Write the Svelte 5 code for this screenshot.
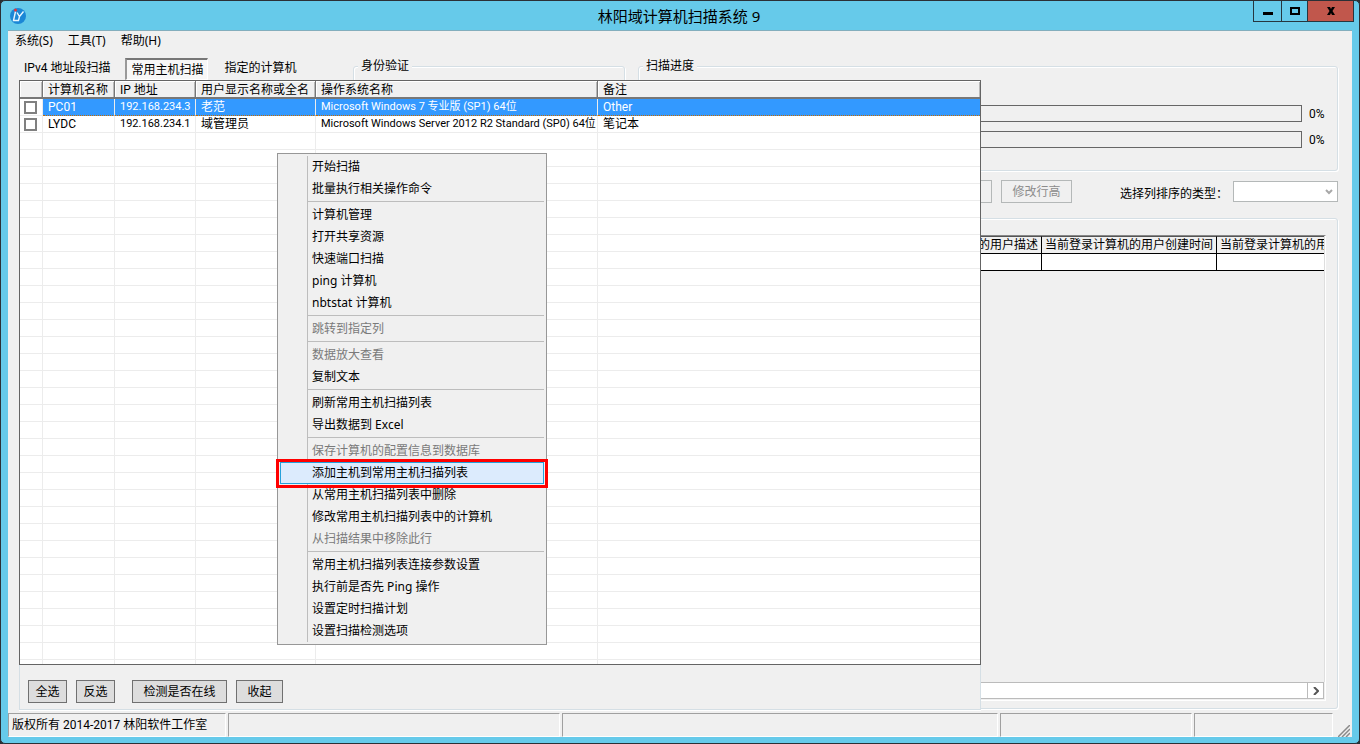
<script>
    let menus = ['系统(S)', '工具(T)', '帮助(H)'];
    let tabs = ['IPv4 地址段扫描', '常用主机扫描', '指定的计算机'];
    let activeTab = '常用主机扫描';

    let hosts = [
        { name: 'PC01', ip: '192.168.234.3', user: '老范', os: 'Microsoft Windows 7 专业版 (SP1) 64位', note: 'Other', checked: false },
        { name: 'LYDC', ip: '192.168.234.1', user: '域管理员', os: 'Microsoft Windows Server 2012 R2 Standard (SP0) 64位', note: '笔记本', checked: false }
    ];
    let selected = 'PC01';
    let emptyRows = Array(60);

    // groups are divided by a separator line
    let menuGroups = [
        [{ text: '开始扫描' }, { text: '批量执行相关操作命令' }],
        [
            { text: '计算机管理' },
            { text: '打开共享资源' },
            { text: '快速端口扫描' },
            { text: 'ping 计算机' },
            { text: 'nbtstat 计算机' }
        ],
        [{ text: '跳转到指定列', disabled: true }],
        [{ text: '数据放大查看', disabled: true }, { text: '复制文本' }],
        [{ text: '刷新常用主机扫描列表' }, { text: '导出数据到 Excel' }],
        [
            { text: '保存计算机的配置信息到数据库', disabled: true },
            { text: '添加主机到常用主机扫描列表', active: true },
            { text: '从常用主机扫描列表中删除' },
            { text: '修改常用主机扫描列表中的计算机' },
            { text: '从扫描结果中移除此行', disabled: true }
        ],
        [
            { text: '常用主机扫描列表连接参数设置' },
            { text: '执行前是否先 Ping 操作' },
            { text: '设置定时扫描计划' },
            { text: '设置扫描检测选项' }
        ]
    ];

    function checkAll() {
        hosts = hosts.map((h) => ({ ...h, checked: true }));
    }

    function invert() {
        hosts = hosts.map((h) => ({ ...h, checked: !h.checked }));
    }
</script>

<div class="window">
    <header class="titlebar">
        <svg class="logo" viewBox="0 0 16 16" aria-hidden="true">
            <circle cx="8" cy="8" r="8" fill="#1b87d6" />
            <path d="M5.500 3.500 3.500 12.500H9M7 4.500 9.500 8.500 13.500 3.500M9.500 8.500 8.500 12.500" fill="none" stroke="#e8f6ff" stroke-width="1.400" />
            <circle cx="5.500" cy="2" r="1.500" fill="#e0353c" />
        </svg>
        <h1>林阳域计算机扫描系统 9</h1>
        <div class="controls">
            <button class="min" aria-label="最小化">
                <svg viewBox="0 0 10 10"><path d="M0 6h10v3H0z" /></svg>
            </button>
            <button class="max" aria-label="最大化">
                <svg viewBox="0 0 10 10"><path d="M0 1h10v8H0zM2 3v4h6V3z" fill-rule="evenodd" /></svg>
            </button>
            <button class="close" aria-label="关闭">
                <svg viewBox="0 0 10 10"><path d="M1 1h3l1 2 1-2h3L6.500 5 9 9H6L5 7 4 9H1l2.500-4z" /></svg>
            </button>
        </div>
    </header>

    <div class="client">
        <nav class="menubar">
            {#each menus as m}
                <button>{m}</button>
            {/each}
        </nav>

        <main>
            <div class="top">
                <div class="tabs" role="tablist">
                    {#each tabs as t}
                        <button role="tab" aria-selected={t === activeTab} class:on={t === activeTab} on:click={() => (activeTab = t)}>{t}</button>
                    {/each}
                </div>
                <fieldset class="auth">
                    <legend>身份验证</legend>
                </fieldset>
                <fieldset class="scan">
                    <legend>扫描进度</legend>
                    <div class="bar"><progress value="0" max="100" aria-label="扫描进度"></progress><span>0%</span></div>
                    <div class="bar"><progress value="0" max="100" aria-label="扫描进度"></progress><span>0%</span></div>
                </fieldset>
            </div>

            <div class="tools">
                <button disabled aria-label="操作"></button>
                <button disabled>修改行高</button>
                <label for="sort">选择列排序的类型：</label>
                <div class="combo">
                    <select id="sort" disabled></select>
                    <svg viewBox="0 0 8 6"><path d="M1 1 4 4 7 1" fill="none" stroke="#a8a8a8" stroke-width="2" /></svg>
                </div>
            </div>

            <fieldset class="results">
                <div class="grid">
                    <div class="viewport">
                        <table>
                            <thead>
                                <tr><th class="wide"></th><th class="desc">当前登录计算机的用户描述</th><th>当前登录计算机的用户创建时间</th><th>当前登录计算机的用</th></tr>
                            </thead>
                            <tbody>
                                <tr><td></td><td></td><td></td><td></td></tr>
                            </tbody>
                        </table>
                    </div>
                    <div class="hscroll">
                        <button aria-label="向右滚动">
                            <svg viewBox="0 0 6 8"><path d="M1 0 5 4 1 8" fill="none" stroke="#555" stroke-width="2" /></svg>
                        </button>
                    </div>
                </div>
            </fieldset>

            <section class="panel">
                <div class="list">
                    <table>
                        <colgroup>
                            <col class="c-check" /><col class="c-name" /><col class="c-ip" /><col class="c-user" /><col class="c-os" /><col />
                        </colgroup>
                        <thead>
                            <tr><th></th><th>计算机名称</th><th>IP 地址</th><th>用户显示名称或全名</th><th>操作系统名称</th><th>备注</th></tr>
                        </thead>
                        <tbody>
                            {#each hosts as h}
                                <tr class:selected={h.name === selected} on:click={() => (selected = h.name)}>
                                    <td class="check"><input type="checkbox" bind:checked={h.checked} aria-label={h.name} /></td>
                                    <td>{h.name}</td>
                                    <td class="latin">{h.ip}</td>
                                    <td>{h.user}</td>
                                    <td class="latin">{h.os}</td>
                                    <td>{h.note}</td>
                                </tr>
                            {/each}
                            {#each emptyRows as _}
                                <tr><td></td><td></td><td></td><td></td><td></td><td></td></tr>
                            {/each}
                        </tbody>
                    </table>
                </div>
                <div class="actions">
                    <button on:click={checkAll}>全选</button>
                    <button on:click={invert}>反选</button>
                    <button class="online">检测是否在线</button>
                    <button class="fold">收起</button>
                </div>
            </section>

            <div class="popup" role="menu">
                {#each menuGroups as group}
                    <div class="group">
                        {#each group as item}
                            <button role="menuitem" disabled={item.disabled} class:active={item.active}>{item.text}</button>
                        {/each}
                    </div>
                {/each}
            </div>
        </main>

        <footer class="status">
            <span class="copy">版权所有 2014-2017 林阳软件工作室</span>
            <span class="s2"></span>
            <span class="s3"></span>
            <span class="s4"></span>
            <span class="s5"></span>
            <svg viewBox="0 0 12 12"><path d="M0 12 12 0M4 12 12 4M8 12 12 8" stroke="#8a8a8a" stroke-width="1.500" /></svg>
        </footer>
    </div>
</div>

<style>
    :global(body) {
        margin: 0;
        background: #2b2f33;
    }

    .window {
        box-sizing: border-box;
        height: 100vh;
        display: flex;
        flex-direction: column;
        padding: 0 7px 6px;
        border: 1px solid #2b3036;
        border-radius: 5px;
        background: #66caea;
        color: #000;
        font: 12px/16px Roboto, "Noto Sans CJK SC", sans-serif;
    }

    button,
    select {
        font: inherit;
        color: inherit;
        padding: 0;
        margin: 0;
        border: 0;
        background: none;
        white-space: nowrap;
    }

    th,
    td,
    label,
    legend,
    span {
        white-space: nowrap;
    }

    table {
        border-collapse: separate;
        border-spacing: 0;
        table-layout: fixed;
    }

    .titlebar {
        position: relative;
        display: flex;
        align-items: center;
        height: 29px;
    }

    .logo {
        width: 16px;
        height: 16px;
        margin-left: 2px;
    }

    h1 {
        flex: 1;
        margin: 0;
        padding-right: 20px;
        text-align: center;
        font: 15px/28px "Noto Sans", "Noto Sans CJK SC", sans-serif;
    }

    .controls {
        position: absolute;
        top: 0;
        right: -2px;
        display: flex;
        border: 1px solid #26363f;
        border-top: 0;
    }

    .controls button {
        display: grid;
        place-items: center;
        width: 28px;
        height: 20px;
        border-right: 1px solid #26363f;
        box-sizing: border-box;
    }

    .controls .max {
        width: 26px;
    }

    .controls .close {
        width: 45px;
        border-right: 0;
        background: #c1574c;
    }

    .controls svg {
        width: 10px;
        height: 10px;
    }

    .client {
        flex: 1;
        min-height: 0;
        display: flex;
        flex-direction: column;
        border-top: 1px solid #83aebd;
        background: #f0f0f0;
    }

    .menubar {
        display: flex;
        gap: 15px;
        height: 20px;
        padding-left: 7px;
        font-family: "Noto Sans", "Noto Sans CJK SC", sans-serif;
    }

    main {
        position: relative;
        flex: 1;
        min-height: 0;
        display: flex;
        flex-direction: column;
        padding: 7px 14px 4px 11px;
    }

    fieldset {
        box-sizing: border-box;
        min-width: 0;
        margin: 0;
        padding: 0;
        border: 1px solid #d5dfe5;
        border-radius: 3px;
        box-shadow: inset 1px 1px #fff, 1px 1px #fff;
    }

    legend {
        margin-left: 4px;
        padding: 0 3px;
        background: #f0f0f0;
    }

    .top {
        display: flex;
        height: 113px;
    }

    .tabs {
        display: flex;
        align-items: flex-start;
        width: 334px;
    }

    .tabs button {
        height: 20px;
        padding: 0 15px 0 5px;
    }

    .tabs .on {
        height: 22px;
        margin-right: 11px;
        padding: 0 4px;
        border: 1px solid #fff;
        border-top: 2px solid #777;
        border-left: 2px solid #999;
        background: #f7f7f7;
    }

    .auth {
        width: 272px;
        margin-right: 13px;
    }

    .scan {
        flex: 1;
    }

    .scan .bar:first-of-type {
        margin-top: 31px;
    }

    .bar {
        display: flex;
        align-items: center;
        margin: 0 14px 9px;
    }

    .bar span {
        width: 14px;
    }

    progress {
        box-sizing: border-box;
        flex: 1;
        height: 17px;
        margin-right: 7px;
        appearance: none;
        border: 1px solid #666;
        background: #f0f0f0;
    }

    progress::-webkit-progress-bar {
        background: #f0f0f0;
    }

    .tools {
        display: flex;
        justify-content: flex-end;
        align-items: center;
        height: 23px;
        margin: 9px 0 15px;
    }

    .tools button {
        width: 71px;
        height: 23px;
        margin-right: 9px;
        border: 1px solid #b4b8b8;
        color: #8c8c8c;
    }

    .tools label {
        margin-left: 39px;
        padding-top: 4px;
    }

    .combo {
        position: relative;
        width: 105px;
        height: 21px;
        margin-left: 5px;
    }

    .combo select {
        width: 100%;
        height: 100%;
        appearance: none;
        border: 1px solid #b4b8b8;
        background: #fff;
        opacity: 1;
    }

    .combo svg {
        position: absolute;
        right: 5px;
        top: 8px;
        width: 8px;
        height: 6px;
    }

    .results {
        flex: 1;
        display: flex;
        padding: 16px 11px 7px;
    }

    .grid {
        flex: 1;
        min-width: 0;
        display: flex;
        flex-direction: column;
        border-top: 1px solid #888;
        border-right: 1px solid #fff;
        border-bottom: 1px solid #fff;
    }

    .viewport {
        flex: 1;
        overflow: hidden;
        border-right: 1px solid #dedede;
    }

    .viewport table {
        width: 1361px;
    }

    .viewport th,
    .viewport td {
        box-sizing: border-box;
        height: 17px;
        padding: 0 0 0 3px;
        border-right: 1px solid #000;
        border-bottom: 1px solid #000;
        font-weight: normal;
        text-align: left;
        line-height: 16px;
    }

    .viewport th {
        width: 175px;
        border-top: 1px solid #555;
        height: 18px;
    }

    .viewport th.wide {
        width: 860px;
    }

    .viewport th.desc {
        width: 151px;
    }

    .viewport td {
        background: #fff;
    }

    .hscroll {
        display: flex;
        justify-content: flex-end;
        height: 15px;
        margin: 0 1px 1px 0;
        border: 1px solid #bbb;
        background: #fff;
    }

    .hscroll button {
        display: grid;
        place-items: center;
        width: 16px;
        border-left: 1px solid #bbb;
    }

    .hscroll svg {
        width: 6px;
        height: 8px;
    }

    /* drops down over the group boxes */
    .panel {
        position: absolute;
        inset: 29px 371px 2px 11px;
        display: flex;
        flex-direction: column;
        box-sizing: border-box;
        border-bottom: 1px solid #fff;
        background: #f0f0f0;
        box-shadow: inset 1px -1px #d5dfe5, inset -1px 0 #d5dfe5;
    }

    .list {
        flex: 1;
        overflow: hidden;
        border: 1px solid #646464;
        background: #fff;
    }

    .list table {
        width: 100%;
    }

    .list th,
    .list td {
        box-sizing: border-box;
        height: 17px;
        padding: 0 0 0 5px;
        border-right: 1px solid #ececec;
        border-bottom: 1px solid #ececec;
        font-weight: normal;
        text-align: left;
        line-height: 16px;
    }

    .list th {
        height: 18px;
        padding-top: 2px;
        border-right: 1px solid #777;
        border-bottom: 2px solid #777;
        background: #f0f0f0;
        box-shadow: inset 1px 1px #fff, inset -1px 0 #b8b8b8;
        line-height: 14px;
    }

    .list th:last-child,
    .list td:last-child {
        border-right: 0;
    }

    .c-check { width: 23px; }
    .c-name { width: 72px; }
    .c-ip { width: 81px; }
    .c-user { width: 120px; }
    .c-os { width: 282px; }

    .list .latin {
        font-size: 11px;
    }

    .list td.check {
        padding: 0 0 0 4px;
    }

    .list input {
        display: block;
        box-sizing: border-box;
        width: 13px;
        height: 13px;
        margin: 0;
        appearance: none;
        border: 2px solid #808080;
        background: #fff;
    }

    .list input:checked {
        background: #3399ff;
    }

    .selected td:not(.check) {
        border-bottom: 1px dotted #c66a00;
        background: #3399ff;
        color: #fff;
    }

    .actions {
        display: flex;
        gap: 9px;
        padding: 15px 9px 7px;
    }

    .actions button {
        width: 39px;
        height: 23px;
        border: 1px solid #707070;
        background: #ddd;
    }

    .actions .online {
        width: 95px;
        margin-left: 8px;
    }

    .actions .fold {
        width: 47px;
    }

    .popup {
        position: absolute;
        left: 269px;
        top: 102px;
        box-sizing: border-box;
        width: 270px;
        padding: 2px;
        border: 1px solid #979797;
        background: linear-gradient(#bdbdbd, #bdbdbd) 29px 2px / 1px calc(100% - 4px) no-repeat #f0f0f0;
        font-family: "Noto Sans", "Noto Sans CJK SC", sans-serif;
    }

    .group + .group::before {
        content: "";
        display: block;
        height: 1px;
        margin: 1px 0 2px 28px;
        background: #bdbdbd;
    }

    .group {
        display: flow-root;
    }

    .popup button {
        display: block;
        box-sizing: border-box;
        width: 100%;
        height: 22px;
        padding-left: 32px;
        text-align: left;
    }

    .popup button:disabled {
        color: #7a7a7a;
    }

    .popup .active {
        position: relative;
        padding-left: 31px;
        border: 1px solid #26a0da;
        background: #dcebfd;
    }

    .popup .active::after {
        content: "";
        position: absolute;
        inset: -4px -5px -5px;
        border: 3px solid #f00;
    }

    .status {
        display: flex;
        gap: 2px;
        height: 24px;
        padding: 0 2px 0 0;
        align-items: stretch;
    }

    .status span {
        box-sizing: border-box;
        border: 1px solid #fff;
        border-top-color: #a0a0a0;
        border-left-color: #a0a0a0;
        padding: 3px 0 0 3px;
    }

    .status .copy { width: 218px; }
    .status .s2 { width: 332px; }
    .status .s3 { flex: 1; }
    .status .s4 { width: 192px; }
    .status .s5 { width: 139px; }

    .status svg {
        align-self: flex-end;
        width: 12px;
        height: 12px;
        margin-left: 3px;
    }
</style>
